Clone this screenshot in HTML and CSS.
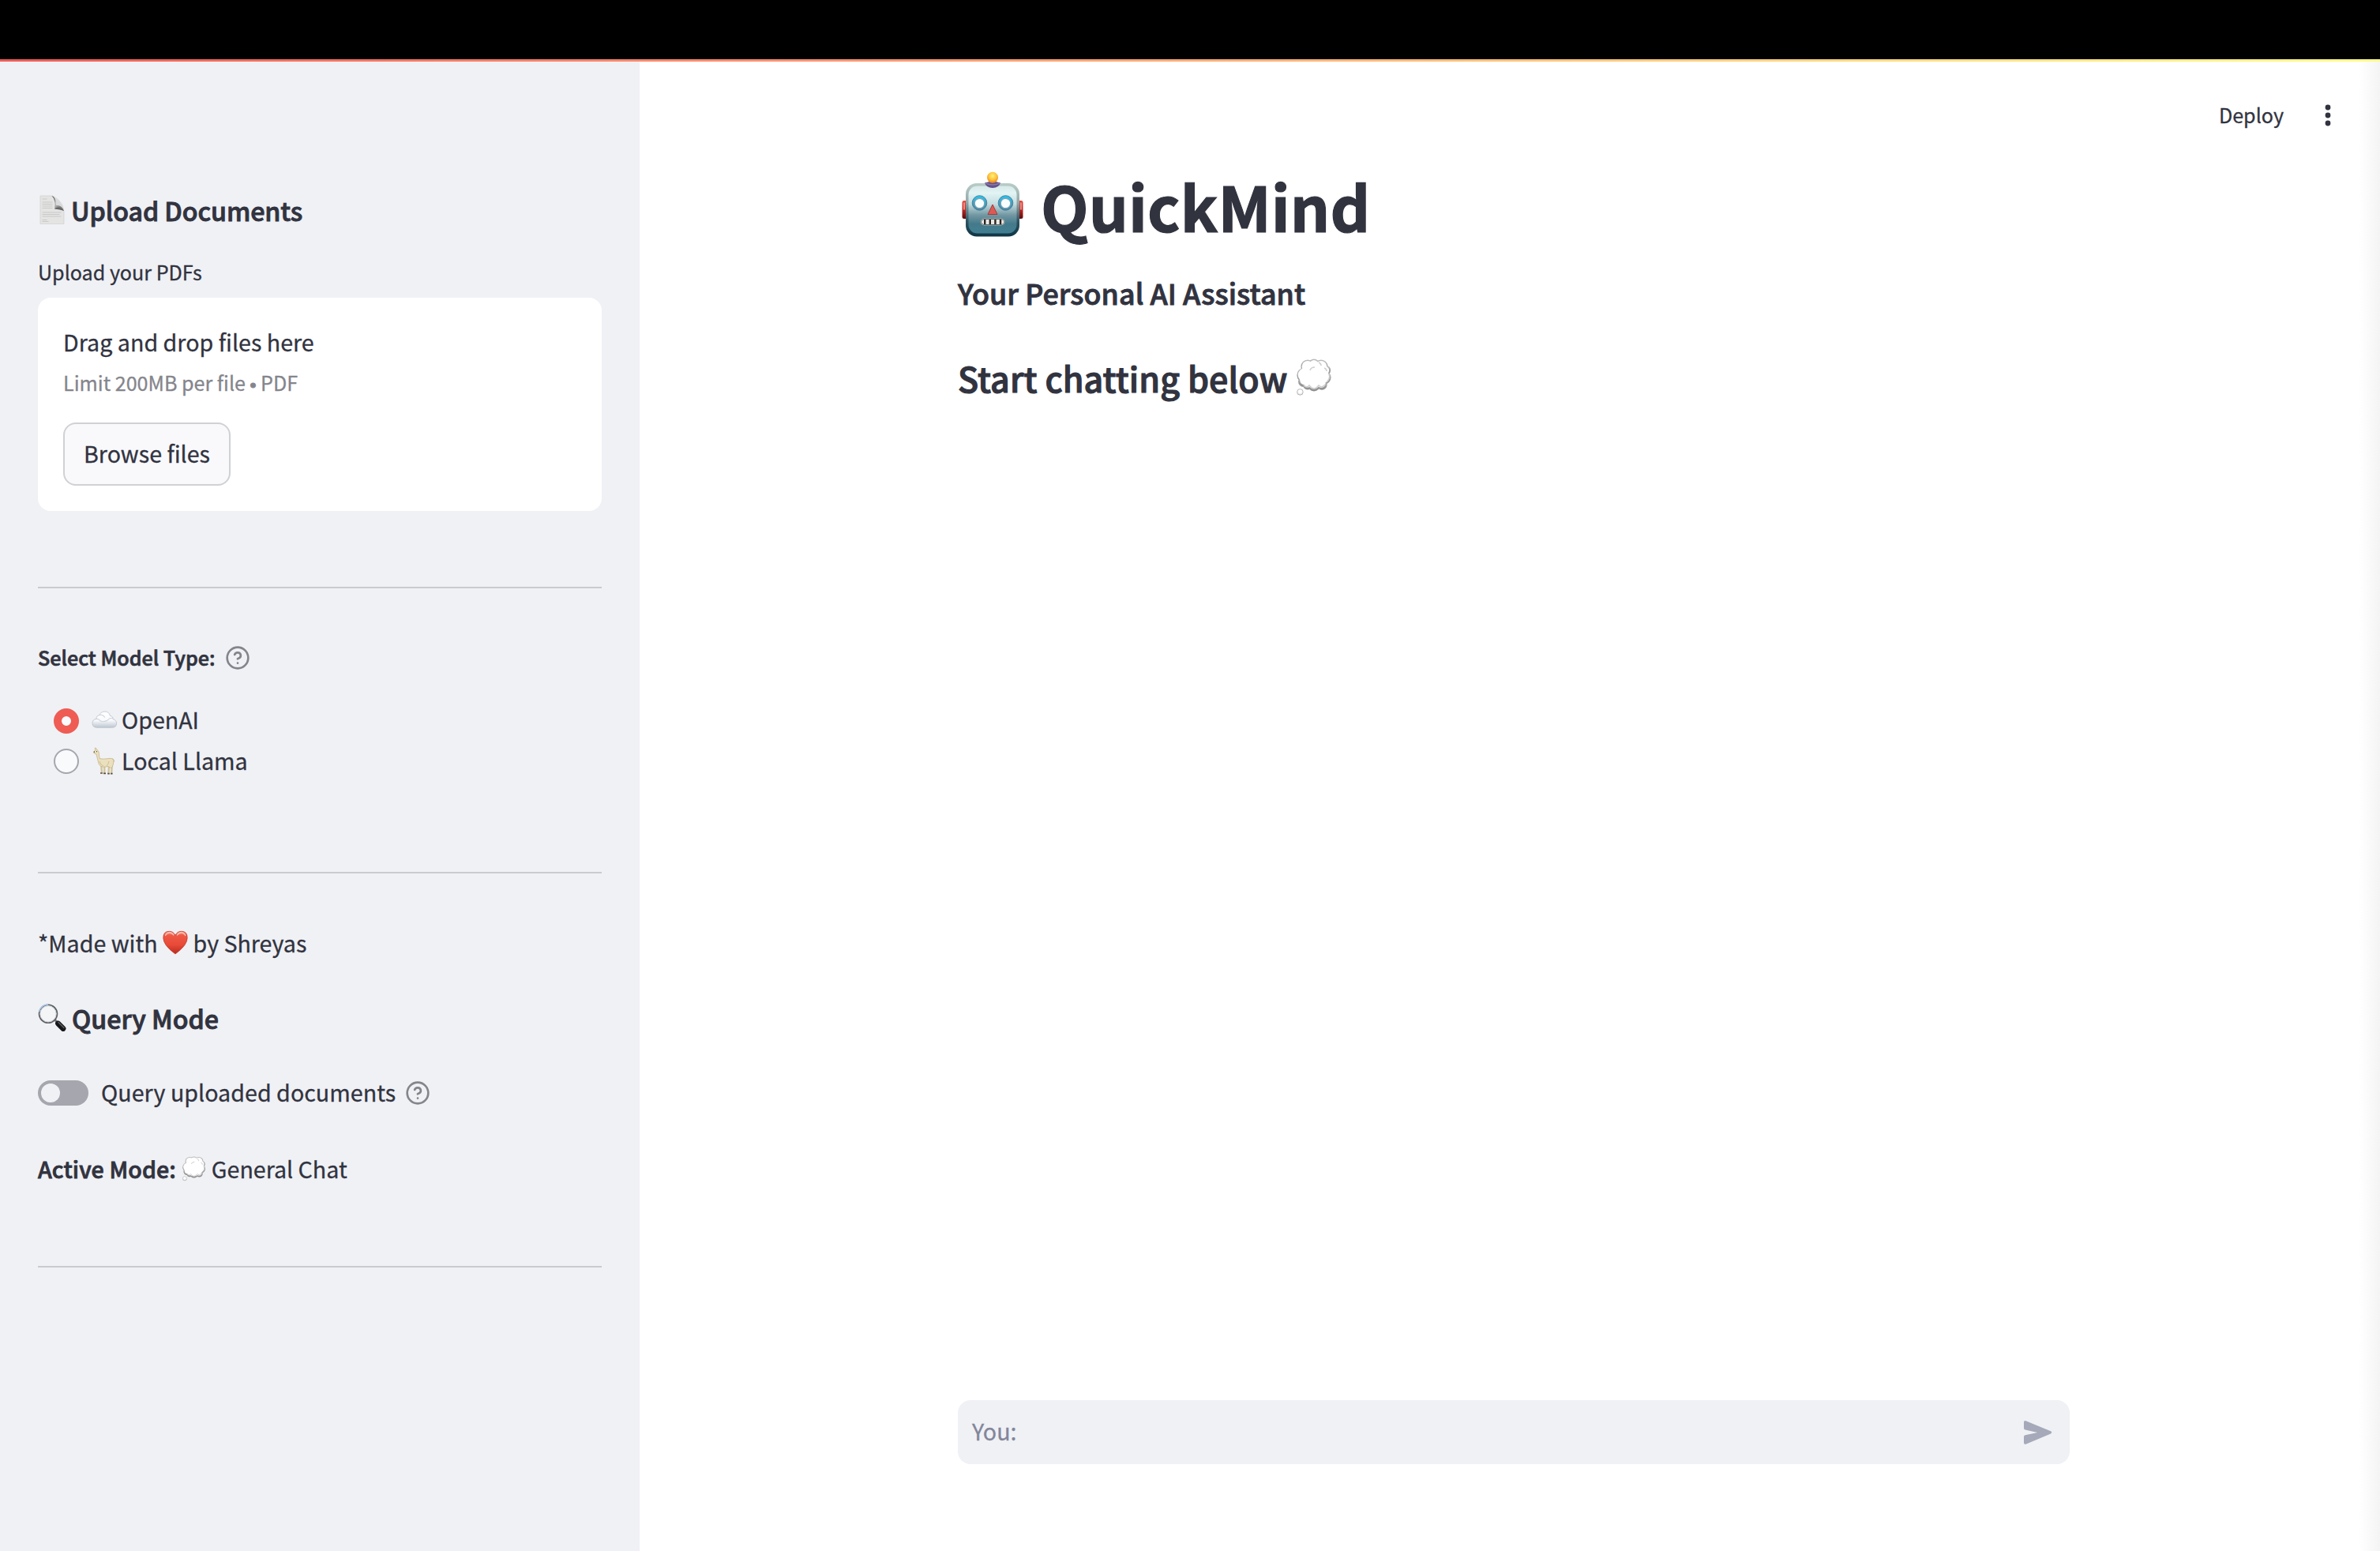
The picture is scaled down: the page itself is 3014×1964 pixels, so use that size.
FILE: index.html
```html
<!DOCTYPE html>
<html lang="en">
<head>
<meta charset="utf-8">
<title>QuickMind</title>
<link rel="stylesheet" href="styles.css">
</head>
<body>
<svg class="defs" aria-hidden="true">
  <defs>
    <radialGradient id="puff" cx=".5" cy=".4" r=".6"><stop offset=".45" stop-color="#fff"/><stop offset=".85" stop-color="#e2e2e2"/><stop offset="1" stop-color="#adadad"/></radialGradient>
    <linearGradient id="puffBase" x1="0" y1="0" x2="0" y2="1"><stop offset="0" stop-color="#bdbdbd"/><stop offset="1" stop-color="#8c8c8c"/></linearGradient>
    <symbol id="thought" viewBox="0 0 48 48">
      <g fill="url(#puffBase)">
        <circle cx="17" cy="10" r="8.600"/><circle cx="25" cy="7.400" r="6.800"/><circle cx="34" cy="10" r="8.600"/><circle cx="40" cy="15" r="6.200"/>
        <circle cx="12.500" cy="21" r="9.200"/><circle cx="38" cy="24" r="8.600"/><circle cx="12" cy="29" r="7"/><circle cx="17" cy="33.400" r="6"/><circle cx="25" cy="33.200" r="8.200"/><circle cx="35" cy="33.200" r="6.600"/>
      </g>
      <g fill="#fff">
        <circle cx="17" cy="10.200" r="7.300"/><circle cx="25" cy="8" r="5.900"/><circle cx="34" cy="10.200" r="7.300"/><circle cx="39.400" cy="15" r="4.800"/>
        <circle cx="12.900" cy="20.800" r="8.200"/><circle cx="37.200" cy="23.200" r="7.400"/><circle cx="12.800" cy="27.600" r="5.600"/><circle cx="17.400" cy="31.400" r="5"/><circle cx="25" cy="31" r="7.400"/><circle cx="34.200" cy="31.400" r="5.400"/>
        <circle cx="25" cy="20" r="15"/>
      </g>
      <path d="M12 34q4 4 7 0q6 8 12 0q4 4 8-1M41 30q5-5 3-10M20 15q1-4 6-4M31 5q3 1 3 4M38 12q3 1 3 4" fill="none" stroke="#cfcfcf" stroke-width="1.500"/>
      <circle cx="7.400" cy="42.400" r="3.800" fill="url(#puff)" stroke="#a8a8a8" stroke-width=".7"/>
    </symbol>
    <symbol id="help" viewBox="0 0 24 24">
      <g fill="none" stroke="currentColor" stroke-width="2" stroke-linecap="round" stroke-linejoin="round"><circle cx="12" cy="12" r="10"/><path d="M9.09 9a3 3 0 0 1 5.83 1c0 2-3 3-3 3"/><path d="M12 17h.01"/></g>
    </symbol>
  </defs>
</svg>

<div class="titlebar"></div>
<div class="decoration"></div>
<div class="app">
  <aside class="sidebar">
    <h3 class="heading heading-upload">
      <svg class="icon-doc" viewBox="0 0 36 40">
        <defs><linearGradient id="curl" x1="1" y1="1" x2=".2" y2=".1"><stop offset="0" stop-color="#5a5a5a"/><stop offset=".4" stop-color="#8a8a8a"/><stop offset=".7" stop-color="#bdbdbd"/><stop offset="1" stop-color="#3f3f3f"/></linearGradient></defs>
        <path d="M3 2h16q3 1 4 6 1 6 2 9 6 1 8 4v16.500H3z" fill="#e4e4e3" stroke="#d0d0cf" stroke-width=".7"/>
        <path d="M19 2q4 1 10 8 4 5 4 11-2-4-11-2.500 1-5 0-10-1-5-3-6.500z" fill="#d9dadb"/>
        <path d="M17.500 2q5.500 2 5.500 12 7-1 10 7-4-3-12-2.500 1-5 0-10-.7-4.500-3.500-6.500z" fill="url(#curl)"/>
        <path d="M21 18.500q6-5 12 2.500-5-2-12-2.500z" fill="#666"/>
        <path d="M5.500 6h6M5.500 10h13M5.500 12.500h13M5.500 15h13M5.500 17.500h13M5.500 23h24M5.500 25.500h22M5.500 28h24M5.500 32.500h6M5.500 34.500h8" stroke="#c9c9c9" stroke-width="1" fill="none"/>
      </svg>
      <span>Upload Documents</span>
    </h3>
    <div class="label label-upload">Upload your PDFs</div>
    <section class="dropzone">
      <div class="drop-title">Drag and drop files here</div>
      <div class="drop-hint">Limit 200MB per file <span class="bullet">•</span> PDF</div>
      <button class="browse">Browse files</button>
    </section>
    <hr class="rule rule-upload">
    <div class="label label-model"><span>Select Model Type:</span><svg class="icon-help"><use href="#help"/></svg></div>
    <div class="radios">
      <label class="radio">
        <span class="dot dot-on"></span>
        <svg class="emoji" viewBox="0 0 32 32">
          <defs><linearGradient id="sky" x1="0" y1="0" x2="0" y2="1"><stop offset="0" stop-color="#fff"/><stop offset=".55" stop-color="#f8fafc"/><stop offset="1" stop-color="#bcc6d1"/></linearGradient></defs>
          <path d="M7 24.300q-6 0-6-5.600 0-4.700 5-5.300Q6 9 10.300 8.500 11.500 4 17 4q5 0 6.500 5.500 4 .6 3.600 4.300 4.500.8 4.500 5.200 0 5.300-6 5.300z" fill="url(#sky)" stroke="#bfc5cc" stroke-width=".9"/>
          <path d="M10.300 8.500q4-1 6.500 3M6 13.400q3-.5 5 2.300 6 3 12-3l4-.5" fill="none" stroke="#ced5dc" stroke-width="1.100"/>
        </svg>
        <span class="radio-text">OpenAI</span>
      </label>
      <label class="radio radio-local">
        <span class="dot"></span>
        <svg class="emoji" viewBox="0 0 32 32">
          <path d="M12.300 22l.7 8.500M16.300 22v9M22 21l-.5 10M25.800 19.500l-.6 11.500" stroke="#d3c59c" stroke-width="2.400" fill="none"/>
          <path d="M2.800 3.600 4.800 2.300 4.200-1 5.600-.7 7.200 1.800Q9.600 2.800 9.400 6.500L10 12.500q4 1 8 .4 4-.7 7.500-.5 3.800.8 2.300 4.200L27.300 20q-.6 3.500-2.800 4.500l-3.500-2q-4 .8-7 .6-4.500-.8-5.500-6L6 7 2.800 5.600z" fill="#ebe0bd" stroke="#bfae82" stroke-width=".7"/>
          <path d="M10 16q1 5 5 6M22 16q-1 4-3 6M26 13q3 1 2.500 4" stroke="#cfbf92" fill="none" stroke-width="1"/>
          <path d="M2.800 4.200h1.200M6 3.600h.9" stroke="#4b4031" stroke-width="1.300"/>
          <path d="M11 31h3M15 31.400h3M20.200 31.600h2.600M24 31.600h2.600" stroke="#5c5140" stroke-width="1.600"/>
        </svg>
        <span class="radio-text">Local Llama</span>
      </label>
    </div>
    <hr class="rule rule-model">
    <p class="line line-credit"><span>*Made with</span>
      <svg class="emoji emoji-heart" viewBox="0 0 32 32">
        <defs><linearGradient id="love" x1="0" y1="0" x2="0" y2="1"><stop offset="0" stop-color="#f7a08f"/><stop offset=".18" stop-color="#ee5a45"/><stop offset=".6" stop-color="#e84a38"/><stop offset="1" stop-color="#b62c1e"/></linearGradient></defs>
        <path d="M16 31Q.8 20 .8 10.500.8 2.300 8.300 2.300 13.700 2.300 16 7.500q2.300-5.200 7.700-5.200 7.500 0 7.500 8.200Q31.200 20 16 31z" fill="url(#love)" stroke="#c63a2c" stroke-width=".8"/>
        <path d="M3.500 7.500q2-3.500 5.300-3.500 3 0 5 3M18.500 7q2-3 5-3 3.300 0 5.200 3.500" fill="none" stroke="#fbc4b8" stroke-width="1.300" stroke-linecap="round"/>
      </svg>
      <span>by Shreyas</span></p>
    <h3 class="heading heading-query">
      <svg class="icon-lens" viewBox="0 0 36 36">
        <path d="M21.500 20.500 24 23" stroke="#777" stroke-width="3"/>
        <path d="M25.500 25 32 31.500" stroke="#17181a" stroke-width="6.800" stroke-linecap="round"/>
        <path d="M26 23.500 33 30.500" stroke="#5d6165" stroke-width="1.500" stroke-linecap="round"/>
        <circle cx="13" cy="12.800" r="11.400" fill="#f4f5f7" stroke="#5c6065" stroke-width="1.800"/>
        <circle cx="13" cy="12.800" r="10.200" fill="none" stroke="#c9cbce" stroke-width=".9"/>
        <path d="M1.600 10.300Q4 1.100 13 1.100" stroke="#a9c6e8" stroke-width="1.500" fill="none"/>
      </svg>
      <span>Query Mode</span>
    </h3>
    <div class="toggle-row"><span class="toggle"><span class="knob"></span></span><span class="toggle-text">Query uploaded documents</span><svg class="icon-help"><use href="#help"/></svg></div>
    <p class="line line-mode"><strong>Active Mode:</strong><svg class="emoji"><use href="#thought"/></svg><span>General Chat</span></p>
    <hr class="rule rule-mode">
  </aside>

  <main class="main">
    <header class="toolbar">
      <span class="deploy">Deploy</span>
      <svg class="icon-menu" viewBox="0 0 8 28"><circle cx="4" cy="4" r="3.400"/><circle cx="4" cy="14" r="3.400"/><circle cx="4" cy="24" r="3.400"/></svg>
    </header>
    <div class="content">
      <h1 class="title">
        <svg class="icon-robot" viewBox="0 0 88 88">
          <defs>
            <linearGradient id="face" x1="0" y1="0" x2="0" y2="1"><stop offset="0" stop-color="#d5e9e7"/><stop offset=".15" stop-color="#e2f4f4"/><stop offset=".38" stop-color="#c3dcdf"/><stop offset=".62" stop-color="#7096a1"/><stop offset=".8" stop-color="#447a8b"/><stop offset="1" stop-color="#417f91"/></linearGradient>
            <linearGradient id="shell" x1="0" y1="0" x2="0" y2="1"><stop offset="0" stop-color="#b9cdc8"/><stop offset=".35" stop-color="#94a9a9"/><stop offset=".7" stop-color="#2f5664"/><stop offset="1" stop-color="#0e3444"/></linearGradient>
            <linearGradient id="ear" x1="0" y1="0" x2="0" y2="1"><stop offset="0" stop-color="#e6483f"/><stop offset=".45" stop-color="#c32c28"/><stop offset="1" stop-color="#5c0b0d"/></linearGradient>
            <radialGradient id="bulb" cx=".5" cy=".35" r=".6"><stop offset="0" stop-color="#fff07a"/><stop offset=".6" stop-color="#fdc33c"/><stop offset="1" stop-color="#f08a1d"/></radialGradient>
            <linearGradient id="ring" x1="0" y1="0" x2="0" y2="1"><stop offset="0" stop-color="#25c8f4"/><stop offset=".5" stop-color="#3f9fc6"/><stop offset="1" stop-color="#4a84a0"/></linearGradient>
          </defs>
          <rect x="5.500" y="38" width="8" height="23" rx="2.500" fill="url(#ear)"/><rect x="74.500" y="38" width="8" height="23" rx="2.500" fill="url(#ear)"/>
          <path d="M8 41v8M80 41v8" stroke="#f4a09a" stroke-width="1.600" stroke-linecap="round"/>
          <rect x="10" y="16" width="68" height="67.500" rx="14" fill="url(#shell)"/>
          <rect x="13.500" y="19.500" width="61" height="60" rx="11" fill="url(#face)"/>
          <path d="M34 15.500q10-3.500 20 0-2 6.500-10 6.500t-10-6.500z" fill="#65518a"/><path d="M35 16q9 4 18 0" stroke="#8c78ad" stroke-width="1.500" fill="none"/>
          <circle cx="44" cy="8.800" r="7" fill="url(#bulb)"/>
          <g stroke="#4e8298" stroke-width="1"><circle cx="27.500" cy="41" r="9.300" fill="url(#ring)"/><circle cx="60.500" cy="41" r="9.300" fill="url(#ring)"/></g>
          <g fill="#f8ffff" stroke="#7fa6b5" stroke-width="1.200"><circle cx="27.500" cy="41.500" r="6.200"/><circle cx="60.500" cy="41.500" r="6.200"/></g>
          <path d="M44 43 50 55.500H38z" fill="#dc5a55" stroke="#a43b3c" stroke-width="1" stroke-linejoin="round"/>
          <rect x="29" y="61" width="30" height="8" rx="4" fill="#2b2522" stroke="#b9cccf" stroke-width=".8"/>
          <path d="M33 62v6q-3 0-3-3t3-3zM35.400 62h4.200v6h-4.200zM42 62h4.200v6H42zM48.600 62h4.200v6h-4.200zM55.200 62q3 0 3 3t-3 3z" fill="#eceae6"/>
        </svg>
        <span>QuickMind</span>
      </h1>
      <h3 class="subtitle">Your Personal AI Assistant</h3>
      <h2 class="start"><span>Start chatting below</span><svg class="icon-thought"><use href="#thought"/></svg></h2>
      <div class="chat-input">
        <span class="placeholder">You:</span>
        <svg class="icon-send" viewBox="0 0 36 30"><path d="M0 1.800Q.2-.6 2.500.3L34 13.200q2.600 1.500 0 3.200L2.500 29.700Q.2 30.400 0 28V20.300q0-1.600 1.600-2L17.200 14.900 1.600 11.500Q0 11.200 0 9.600z"/></svg>
      </div>
    </div>
  </main>
</div>
</body>
</html>
```
FILE: styles.css
```css
* { box-sizing: border-box; }
body {
  margin: 0;
  width: 3014px;
  height: 1964px;
  overflow: hidden;
  background: #fff;
  color: #31333f;
  font-family: "Noto Sans CJK SC", sans-serif;
  font-size: 28.6px;
  line-height: 40px;
  white-space: nowrap;
  -webkit-text-stroke: .3px currentColor;
}
h1, h2, h3, p { margin: 0; }
svg { display: block; flex: none; overflow: visible; }
.defs { position: absolute; width: 0; height: 0; }

.titlebar { height: 75px; background: #000; }
.decoration { height: 3px; background: linear-gradient(90deg, #ee5c54, #fb9070 32%, #fdc57d 65%, #fffb8e); }
.app { display: flex; height: 1886px; }

/* Sidebar */
.sidebar { width: 810px; flex: none; padding: 166px 48px 0; background: #f0f1f5; }
.heading { display: flex; align-items: center; gap: 6px; height: 44px; font-size: 32.2px; font-weight: 500; line-height: 44px; -webkit-text-stroke-width: .9px; }
.heading-upload { letter-spacing: -.07px; }
.icon-doc { width: 36px; height: 40px; }
.icon-lens { width: 36px; height: 36px; }
.label { font-size: 25.1px; }
.label-upload { margin-top: 36px; }
.dropzone { height: 270px; margin-top: 13px; padding: 36px 32px 0; border-radius: 16px; background: #fff; }
.drop-title { letter-spacing: .03px; }
.drop-hint { margin-top: 11px; font-size: 25.1px; color: #84858c; }
.bullet { font-family: "Liberation Sans", sans-serif; font-size: 22.5px; -webkit-text-stroke-width: 1px; }
.browse {
  display: block;
  width: 212px;
  height: 80px;
  margin-top: 27px;
  padding: 0 0 2px;
  border: 2px solid #d0d1d4;
  border-radius: 16px;
  background: #f9f9fc;
  color: inherit;
  font: inherit;
}
.rule { height: 2px; margin: 0; border: 0; background: #cacbcf; }
.rule-upload { margin-top: 96px; }
.label-model { display: flex; align-items: center; gap: 13px; height: 32px; margin-top: 72px; font-weight: 500; -webkit-text-stroke-width: .7px; }
.label-model span { margin-top: -2px; }
.icon-help { width: 32px; height: 32px; color: #84858c; }
.radios { margin-top: 38px; padding-left: 20px; }
.radio { display: flex; align-items: center; height: 51px; }
.dot { width: 32px; height: 32px; margin-right: 16px; border: 2px solid #a5a6ae; border-radius: 50%; background: #f9fafc; }
.dot-on { border: 10px solid #ee5c54; background: #f9fafc; }
.emoji { width: 32px; height: 32px; }
.radio-text { margin: -3px 0 0 6px; }
.radio-local .radio-text { margin-top: -1px; }
.rule-model { margin-top: 115px; }
.line { display: flex; align-items: center; gap: 6px; height: 40px; }
.line strong { font-weight: 500; letter-spacing: .08px; -webkit-text-stroke-width: .8px; }
.line-credit { margin-top: 68px; }
.line-credit span:last-child { margin-left: 1px; }
.emoji-heart { margin-top: -2px; }
.heading-query { margin-top: 53px; gap: 7px; }
.toggle-row { display: flex; align-items: center; height: 32px; margin-top: 57px; }
.toggle { display: flex; align-items: center; width: 64px; height: 32px; padding: 4px; border-radius: 16px; background: #a5a6ae; }
.knob { width: 24px; height: 24px; border-radius: 50%; background: #f0f1f5; }
.toggle-text { margin: -3px 12px 0 16px; letter-spacing: .04px; }
.line-mode { margin-top: 60px; }
.line-mode span { margin-left: 1px; }
.rule-mode { margin-top: 103px; }

/* Main column */
.main {
  display: flex;
  flex: 1;
  flex-direction: column;
  background: linear-gradient(90deg, #fff, #f4f4f4) right / 26px 100% no-repeat #fff;
}
.toolbar { display: flex; align-items: center; justify-content: flex-end; gap: 52px; height: 134px; padding-right: 62px; font-size: 25.1px; }
.icon-menu { width: 8px; height: 28px; margin-top: 2px; fill: #31333f; }
.content { display: flex; flex: 1; flex-direction: column; width: 1408px; margin-left: 403px; padding-bottom: 110px; }
.title { display: flex; align-items: center; gap: 17px; height: 96px; font-size: 78.8px; font-weight: 700; line-height: 96px; letter-spacing: .1px; -webkit-text-stroke-width: 1.2px; }
.icon-robot { width: 88px; height: 88px; }
.subtitle { height: 48px; margin-top: 38px; font-size: 35.8px; font-weight: 500; line-height: 48px; letter-spacing: .06px; -webkit-text-stroke-width: .9px; }
.start { display: flex; align-items: center; gap: 9px; height: 56px; margin-top: 56px; font-size: 43px; font-weight: 500; line-height: 56px; letter-spacing: .08px; -webkit-text-stroke-width: 1.1px; }
.icon-thought { width: 48px; height: 48px; }
.chat-input { display: flex; align-items: center; justify-content: space-between; height: 81px; margin-top: auto; padding: 0 22px 0 18px; border-radius: 16px; background: #f0f1f5; }
.placeholder { padding-bottom: 3px; color: #82869a; }
.icon-send { width: 36px; height: 30px; fill: #a5a9b9; }
```
